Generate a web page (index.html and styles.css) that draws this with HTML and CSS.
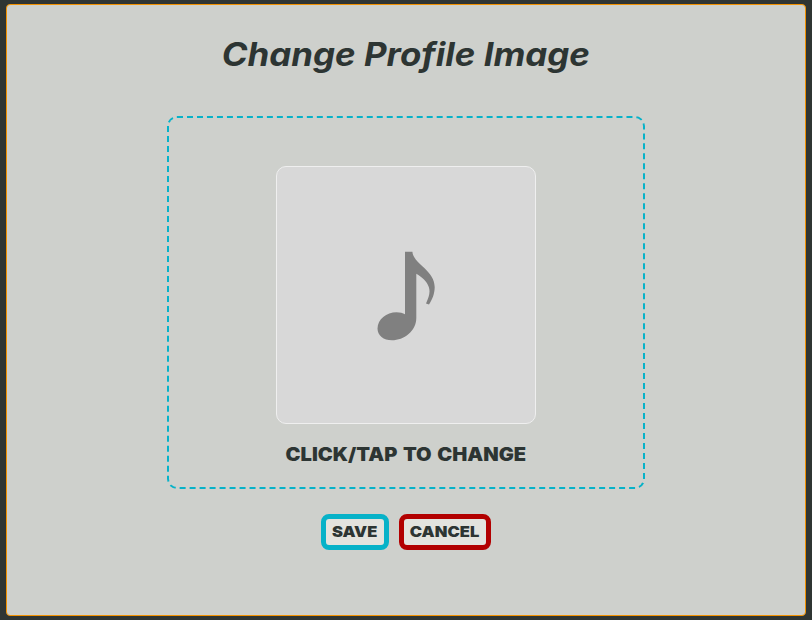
FILE: index.html
```html
<!DOCTYPE html>
<html lang="en">
<head>
<meta charset="utf-8">
<title>Change Profile Image</title>
<link rel="stylesheet" href="styles.css">
</head>
<body>
<main class="panel">
  <h1 class="title"><span>Change Profile Image</span></h1>
  <div class="dropzone">
    <div class="preview">
      <svg class="note" viewBox="0 0 80 110" width="80" height="110" aria-hidden="true">
        <path d="M39 11.7H46.4C47.2 24 68.7 30 68.7 47C68.7 54 66 60 63 64.5L60 63.4C63 57 64.5 52 62.8 47C61 41.5 56 37 50.3 33.8V78C50.3 91 38 100.3 26 100.3C17.5 100.3 11.5 95.5 11.5 88.5C11.5 79.5 20.5 72.3 30.5 72.3C34 72.3 37 73 39 74.3Z"/>
      </svg>
    </div>
    <p class="hint"><span>CLICK/TAP TO CHANGE</span></p>
  </div>
  <div class="actions">
    <button class="button save"><span>SAVE</span></button>
    <button class="button cancel"><span>CANCEL</span></button>
  </div>
</main>
</body>
</html>
```
FILE: styles.css
```css
* { box-sizing: border-box; }
body {
  margin: 0;
  height: 620px;
  padding: 4px 6px;
  background: #2f3533;
  color: #2d3533;
  font-family: Inter, "Open Sans", sans-serif;
}
.panel {
  height: 612px;
  border: 1px solid #f39200;
  border-radius: 4px;
  background: #ced0cc;
  display: flex;
  flex-direction: column;
  align-items: center;
}
span { display: inline-block; white-space: nowrap; }
.title {
  margin: 29px 0 0;
  height: 40px;
  line-height: 41px;
  font-size: 32px;
  font-weight: 700;
  font-style: italic;
}
.title span { transform: scaleX(1.09); }
.dropzone {
  width: 478px;
  height: 373px;
  margin-top: 42px;
  padding-top: 48px;
  border: 2px dashed #07b2c8;
  border-radius: 10px;
  display: flex;
  flex-direction: column;
  align-items: center;
}
.preview {
  width: 260px;
  height: 258px;
  border: 1px solid #efefef;
  border-radius: 10px;
  background: #d8d8d8;
  display: flex;
  justify-content: center;
  padding-top: 73px;
}
.note { fill: #808080; }
.hint {
  margin: 18px 0 0;
  height: 24px;
  line-height: 24px;
  font-size: 18.5px;
  font-weight: 900;
}
.hint span { transform: scaleX(1.085); word-spacing: 1.5px; }
.actions {
  display: flex;
  gap: 10px;
  margin-top: 25px;
}
.button {
  height: 36px;
  padding: 0;
  border: 5px solid;
  border-radius: 8px;
  background: #e3e3de;
  color: #2d3533;
  font: 900 15px/26px Inter, sans-serif;
  display: flex;
  justify-content: center;
}
.button span { transform: scaleX(1.1); }
.save { width: 68px; border-color: #07b2c8; }
.cancel { width: 92px; border-color: #b20000; }
```
